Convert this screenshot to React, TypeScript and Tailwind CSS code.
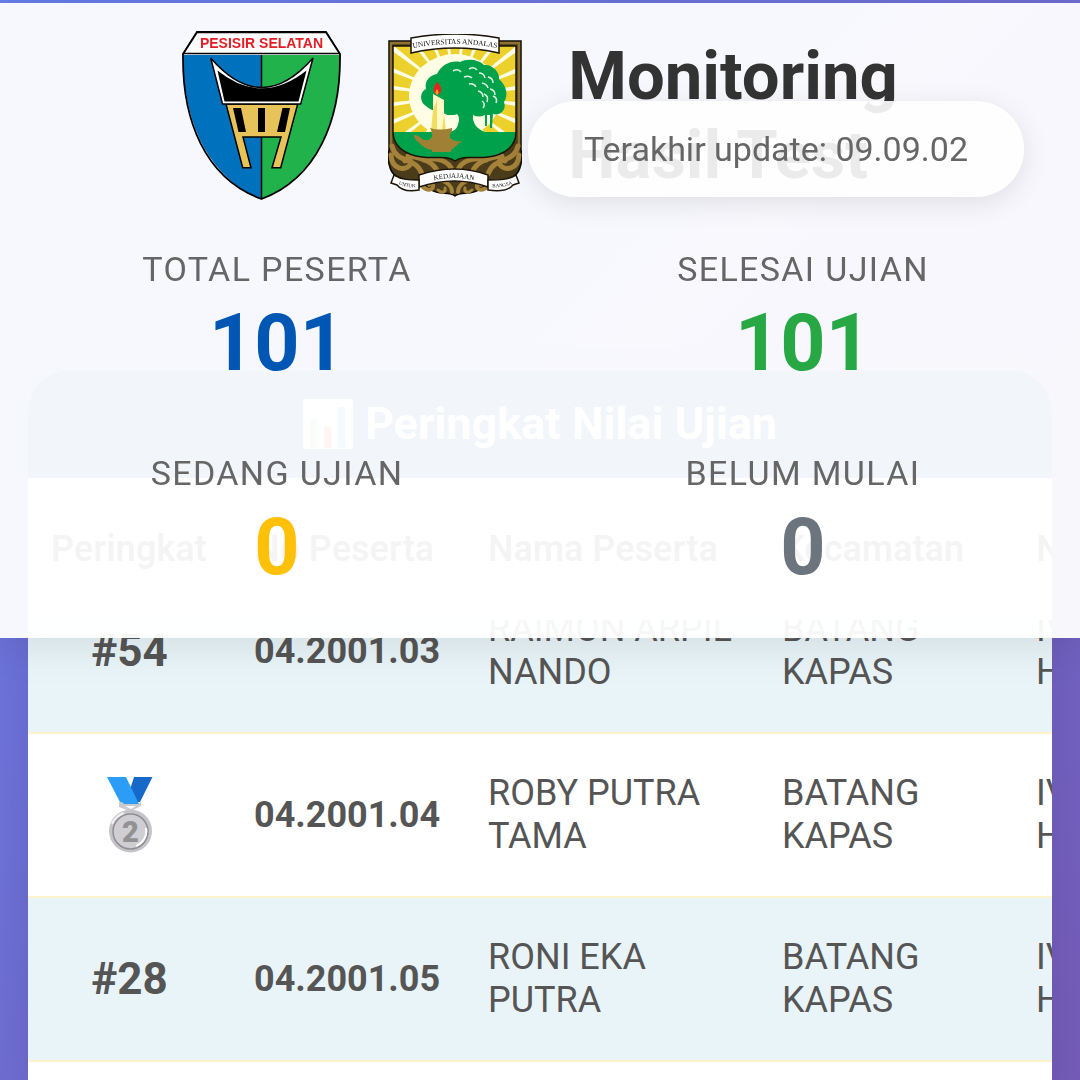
import React, { useLayoutEffect, useRef } from 'react';

interface Peserta {
  rank: number;
  no: string;
  nama: string;
  kecamatan: string;
  nagari: string;
}

const PESERTA: Peserta[] = [
  { rank: 54, no: '04.2001.03', nama: 'RAIMON ARPIL NANDO', kecamatan: 'BATANG KAPAS', nagari: 'IV KOTO HILIE' },
  { rank: 2, no: '04.2001.04', nama: 'ROBY PUTRA TAMA', kecamatan: 'BATANG KAPAS', nagari: 'IV KOTO HILIE' },
  { rank: 28, no: '04.2001.05', nama: 'RONI EKA PUTRA', kecamatan: 'BATANG KAPAS', nagari: 'IV KOTO HILIE' },
  { rank: 61, no: '04.2001.06', nama: 'SYAFRI YANTO', kecamatan: 'BATANG KAPAS', nagari: 'IV KOTO HILIE' },
];

const STATS = [
  { label: 'TOTAL PESERTA', value: 101, color: 'text-[#0056b3]' },
  { label: 'SELESAI UJIAN', value: 101, color: 'text-[#28a745]' },
  { label: 'SEDANG UJIAN', value: 0, color: 'text-[#ffc107]' },
  { label: 'BELUM MULAI', value: 0, color: 'text-[#6c757d]' },
];

const LogoPesisir = () => (
  <svg viewBox="0 0 160 170" className="w-40 shrink-0" role="img" aria-label="Pesisir Selatan">
    <path d="M1 24 C1 85 22 145 79.500 168 V24 Z" fill="#0071bc" />
    <path d="M158 24 C158 85 137 145 79.500 168 V24 Z" fill="#22b24c" />
    <path d="M79.500 24 V168" stroke="#000" strokeWidth="1.5" />
    <path d="M1 23 L15 1 H144 L158 23 V28 C158 88 136 147 79.500 168 C22 147 1 88 1 28 Z" fill="none" stroke="#000" strokeWidth="1.8" />
    <path d="M1.500 22.500 L15 1.500 H144 L157.500 22.500 Z" fill="#fff" stroke="#000" strokeWidth="1.500" />
    <text x="79.500" y="17" textAnchor="middle" fontSize="14" fontWeight="700" fontFamily="Liberation Sans, sans-serif" fill="#e31e24">PESISIR SELATAN</text>
    <path d="M44 73 L60.700 136.700 H69 L61 106 H99 L90 136.700 H98.700 L115.700 73 Z" fill="#e8c35a" stroke="#000" strokeWidth="1.500" />
    <path d="M51 77 H59 L64 101 H56.500 Z M76 77 H83 V101 H76 Z M100.500 77 H108 L103 101 H95 Z" fill="#000" />
    <path d="M28.700 27 Q79.500 86 131 27 L118.700 73 H40.500 Z" fill="#fff" stroke="#000" strokeWidth="1.500" />
    <path d="M35.500 39.500 Q79.500 75 124.500 39.500 L116.500 70.500 H42.500 Z" fill="#000" />
  </svg>
);

const RAYS = Array.from({ length: 24 }, (_, i) => i * 15);

// left half of the carved border, mirrored for the right half
const Carving = () => (
  <g fill="none" stroke="#a5823a" strokeWidth="5" strokeLinecap="round">
    <path d="M4 112 C8 130 28 122 34 140" />
    <path d="M3 121 C4 136 17 137 22 131 C25 126 19 123 17 127" />
    <path d="M20 122 C36 124 45 128 50 138" />
    <path d="M36 126 C50 122 61 128 64 136" />
    <path d="M34 152 C40 158 46 156 45 151 C44 148 41 149 41 151" strokeWidth="4" />
    <path d="M48 146 C58 146 64 152 64 158" strokeWidth="4" />
    <path d="M50 156 C54 160 58 158 57 154" strokeWidth="3" />
  </g>
);

const LogoUnand = () => (
  <svg viewBox="0 0 134 164" className="w-[134px] shrink-0" role="img" aria-label="Universitas Andalas">
    <defs>
      <clipPath id="unand-field">
        <path d="M5 12 H128 V98 C128 113 116 121 100 123 C86 125 76 121 67 127 C58 121 48 125 34 123 C18 121 5 113 5 98 Z" />
      </clipPath>
    </defs>
    <path d="M1 7 H133 V116 C135 124 133 138 126 142 C114 150 99 147 92 155 C84 162 73 157 67 162 C61 157 50 162 42 155 C35 147 20 150 8 142 C1 138 -1 124 1 116 Z" fill="#4a3c1b" stroke="#0d0a04" strokeWidth="1.500" />
    <path d="M3 114 V9 H131 V114" fill="none" stroke="#8f7231" strokeWidth="2.500" />
    <Carving />
    <g transform="translate(134 0) scale(-1 1)">
      <Carving />
    </g>
    <g clipPath="url(#unand-field)">
      <rect x="4" y="8" width="126" height="92" fill="#fffde3" />
      <g fill="#ecd02c">
        {RAYS.map(a => (
          <path key={a} d="M67 62 L167 52 V72 Z" transform={`rotate(${a} 67 62)`} />
        ))}
      </g>
      <ellipse cx="67" cy="62" rx="46" ry="42" fill="#fffde3" />
      <path d="M4 98 H130 V130 H4 Z" fill="#00a14b" />
    </g>
    <path d="M5 12 H128 V98 C128 113 116 121 100 123 C86 125 76 121 67 127 C58 121 48 125 34 123 C18 121 5 113 5 98 Z" fill="none" stroke="#1b1407" strokeWidth="1.500" />
    <path d="M38 72 C31 68 32 57 38 55 C36 46 43 41 49 40 C53 31 63 26 72 28 C80 24 91 26 96 31 C104 30 112 38 111 45 C118 51 121 61 116 68 C119 76 112 82 105 80 L104 94 H102 V81 H99 V92 H97 V81 C93 83 89 83 85 81 C84 89 89 95 97 98 L103 104 H55 L64 97 C71 93 73 84 69 80 C62 83 56 81 53 76 C48 78 42 76 38 72 Z" fill="#00a14b" />
    <ellipse cx="63" cy="89" rx="7" ry="8" fill="#fffde3" />
    <g fill="none" stroke="#dff3df" strokeWidth="1.500">
      <path d="M65 37 q5 -3 8 1 M81 35 q5 -3 8 1 M91 39 q5 0 6 5 M76 43 q5 -2 8 1 M81 50 q5 -1 7 3 M100 43 q5 1 5 6 M94 49 q5 1 6 5 M102 55 q5 1 5 6 M90 57 q5 1 5 6 M96 60 q5 2 3 8 M105 62 q5 2 3 7 M94 67 q4 3 1 7" />
    </g>
    <path d="M45 60 L56 66 V97 H45 Z" fill="#fff9c4" />
    <path d="M45 76 L43 97 H49 V66 Z M56 80 L58 97 H54 Z" fill="#f2dd64" />
    <path d="M49 48 C55 53 54 60 49 61 C45 59 44 54 49 48 Z" fill="#e32620" />
    <path d="M49 55 C51 58 51 60 49 61 C47 60 47 58 49 55 Z" fill="#f6a21e" />
    <path d="M42 94 Q51 97 64 94 C65 98 61 99 62 104 C66 107 69 108 75 107 C70 109 67 114 63 116 V118 H44 V116 C36 115 33 110 29 107 C27 105 26 103 26 101 C31 101 32 104 36 106 C43 107 47 103 42 94 Z" fill="#a08034" />
    <g fill="#fff" stroke="#1b1407" strokeWidth="1.500">
      <path d="M23 4 Q67 -4 111 4 V19 Q67 9 23 19 Z" />
      <path d="M31 141 Q67 129 100 141 V153 Q67 141 31 153 Z" />
      <path d="M6 141 C14 146 22 146 31 146 V156 C20 158 13 156 9 151 L3 149 Z" />
      <path d="M128 141 C120 146 112 146 100 146 V156 C114 158 121 156 125 151 L131 149 Z" />
      <path id="unand-top" d="M20 15 Q67 5 114 15" fill="none" stroke="none" />
      <path id="unand-mid" d="M33 150 Q67 138 99 150" fill="none" stroke="none" />
      <path id="unand-left" d="M8 149 Q16 154 31 153" fill="none" stroke="none" />
      <path id="unand-right" d="M101 153 Q117 154 127 149" fill="none" stroke="none" />
    </g>
    <g fill="#111" fontFamily="Liberation Serif, serif" textAnchor="middle">
      <text fontSize="7.400"><textPath href="#unand-top" startOffset="50%">UNIVERSITAS ANDALAS</textPath></text>
      <text fontSize="7"><textPath href="#unand-mid" startOffset="50%">KEDJAJAAN</textPath></text>
      <text fontSize="5"><textPath href="#unand-left" startOffset="50%">UNTUK</textPath></text>
      <text fontSize="5"><textPath href="#unand-right" startOffset="50%">BANGSA</textPath></text>
    </g>
  </svg>
);

const SilverMedal = () => (
  <svg viewBox="0 0 46 76" className="mx-auto h-[76px]" role="img" aria-label="Peringkat 2">
    <path d="M27 0 H45.500 L33 25 H19 Z" fill="#1769c9" />
    <path d="M0 0 H19 L32 27 H14 Z" fill="#2b9df6" />
    <path d="M12 25 H15 L17 27 H32 L34 25 V29 L26 33 V37 H20 V33 L12 30 Z" fill="#c9c9ce" />
    <path d="M18 29 H29 L24 32 Z" fill="#fff" />
    <circle cx="23.500" cy="54" r="21.500" fill="#c5c4c9" />
    <circle cx="23.500" cy="54.500" r="17.500" fill="#cfced2" stroke="#8f8f93" strokeWidth="1.500" />
    <path d="M39 51 A16 16 0 0 1 29 69" fill="none" stroke="#fff" strokeWidth="2" />
    <path d="M5 47 A20 20 0 0 1 17 36" fill="none" stroke="#f1f1f3" strokeWidth="2" />
    <text x="23.500" y="65" textAnchor="middle" fontSize="29" fontWeight="900" fontFamily="Roboto, sans-serif" fill="#929196">2</text>
  </svg>
);

const ChartIcon = () => (
  <svg viewBox="0 0 50 50" className="h-[50px] w-[50px]" aria-hidden="true">
    <rect width="50" height="50" fill="#fafafa" />
    <path d="M0 9 H50 M0 17 H50 M0 25 H50 M0 33 H50 M0 41 H50" stroke="#dfe5e8" />
    <rect x="7" y="20" width="7" height="29" fill="#9cc59a" />
    <rect x="21" y="28" width="7" height="21" fill="#f44336" />
    <rect x="35" y="8" width="7" height="41" fill="#3f9be8" />
  </svg>
);

const Header = () => (
  <header className="absolute inset-x-0 top-[3px] z-20 bg-white/95 px-7 pt-7 pb-[45px] shadow-[0_6px_42px_rgba(0,0,0,0.1)]">
    <div className="flex items-center justify-center gap-[46px]">
      <LogoPesisir />
      <LogoUnand />
      <h1 className="text-[67px] leading-[79px] font-bold text-[#333]">
        Monitoring
        <br />
        Hasil Test
      </h1>
    </div>

    <div className="mt-12 grid grid-cols-2 gap-x-7 gap-y-16 text-center">
      {STATS.map(s => (
        <div key={s.label}>
          <p className="text-[34px] leading-10 tracking-[0.04em] text-[#666]">{s.label}</p>
          <p className={`mt-2 text-[79px] leading-[92px] font-bold ${s.color}`}>{s.value}</p>
        </div>
      ))}
    </div>

    {/* last refresh, floats over the title */}
    <div className="absolute top-[98px] right-14 rounded-full bg-white/90 px-14 py-7 text-[34px] leading-10 text-[#666] shadow-[0_6px_28px_rgba(0,0,0,0.1)]">
      Terakhir update: 09.09.02
    </div>
  </header>
);

const RankingTable = () => {
  const scroller = useRef<HTMLDivElement>(null);

  // open slightly scrolled, the head stays in place
  useLayoutEffect(() => {
    if (scroller.current) scroller.current.scrollTop = 50;
  }, []);

  return (
    <section className="flex min-h-0 flex-1 flex-col overflow-hidden rounded-t-[42px] bg-white shadow-[0_14px_42px_rgba(0,0,0,0.1)]">
      <h2 className="flex h-[108px] shrink-0 items-center justify-center gap-3 bg-[#003b99] text-[45px] font-bold text-white">
        <ChartIcon />
        Peringkat Nilai Ujian
      </h2>
      <div ref={scroller} className="min-h-0 flex-1 overflow-auto [scrollbar-width:none]">
        <table className="w-[1185px] table-fixed border-separate border-spacing-0 text-[36px] leading-[43px] text-[#555]">
          <colgroup>
            <col className="w-[203px]" />
            <col className="w-[234px]" />
            <col className="w-[294px]" />
            <col className="w-[254px]" />
            <col className="w-[200px]" />
          </colgroup>
          <thead>
            <tr className="text-left text-[#333]">
              {['Peringkat', 'No Peserta', 'Nama Peserta', 'Kecamatan', 'Nagari'].map(h => (
                <th key={h} className="sticky top-0 h-[142px] bg-white px-[23px] font-semibold whitespace-nowrap">{h}</th>
              ))}
            </tr>
          </thead>
          <tbody>
            {PESERTA.map(p => (
              <tr key={p.no} className="odd:bg-[#e8f4f8] [&>td]:h-[164px] [&>td]:border-b-2 [&>td]:border-[#fff3cd] [&>td]:px-[23px]">
                <td className="text-center text-[44px] font-bold">{p.rank === 2 ? <SilverMedal /> : `#${p.rank}`}</td>
                <td className="font-bold">{p.no}</td>
                <td>{p.nama}</td>
                <td>{p.kecamatan}</td>
                <td>{p.nagari}</td>
              </tr>
            ))}
          </tbody>
        </table>
      </div>
    </section>
  );
};

const App: React.FC = () => (
  <div className="relative flex h-screen flex-col overflow-hidden bg-linear-135 from-[#667eea] to-[#764ba2] to-[145%] px-7 pt-[370px] font-[Roboto,sans-serif]">
    <Header />
    <RankingTable />
  </div>
);

export default App;
